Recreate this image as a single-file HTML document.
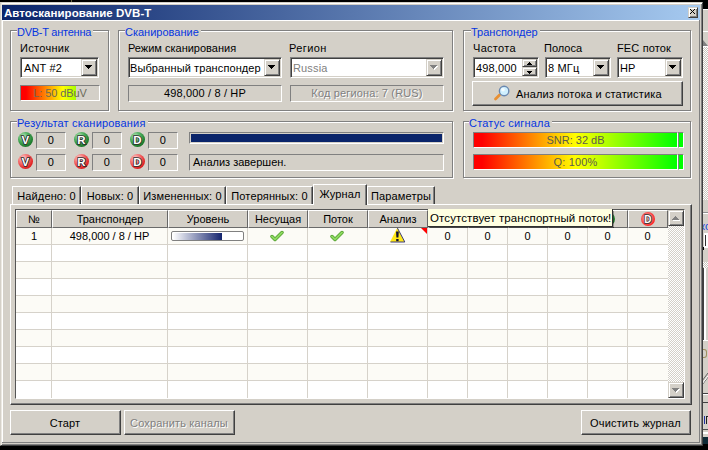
<!DOCTYPE html>
<html><head><meta charset="utf-8">
<style>
*{margin:0;padding:0;box-sizing:border-box}
html,body{width:708px;height:450px;overflow:hidden;background:#000}
body{position:relative;font-family:"Liberation Sans",sans-serif;font-size:11px;color:#000;letter-spacing:0.15px}
.a{position:absolute}
.t{position:absolute;white-space:nowrap;line-height:13px;height:13px}
.etch{position:absolute;border:1px solid #808080;box-shadow:inset 1px 1px 0 #fff,1px 1px 0 #fff}
.leg{position:absolute;background:#d4d0c8;color:#0636e0;letter-spacing:0;padding:0 2px 0 0;line-height:13px;height:13px;white-space:nowrap}
.sunk2{position:absolute;background:#fff;border:1px solid;border-color:#808080 #fff #fff #808080;box-shadow:inset 1px 1px 0 #404040,inset -1px -1px 0 #d4d0c8}
.sunk1{position:absolute;border:1px solid;border-color:#808080 #fff #fff #808080;background:#d4d0c8}
.rbtn{position:absolute;background:#d4d0c8;border:1px solid;border-color:#d4d0c8 #404040 #404040 #d4d0c8;box-shadow:inset 1px 1px 0 #fff,inset -1px -1px 0 #808080}
.pbtn{position:absolute;background:#d4d0c8;border:1px solid;border-color:#fff #404040 #404040 #fff;box-shadow:inset -1px -1px 0 #808080}
.arr{position:absolute;width:0;height:0;border-left:4px solid transparent;border-right:4px solid transparent;border-top:4px solid #000}
.dis{color:#808080;text-shadow:1px 1px 0 #fff}
.ball{position:absolute;width:15px;height:15px;border-radius:50%;color:#fff;font-weight:bold;font-size:10px;line-height:15px;text-align:center;text-shadow:0 0 1px #222,0 0 1px #222}
.g{background:radial-gradient(circle at 35% 30%,#a8dca8 0%,#45a555 35%,#1d7a2d 75%,#186a25 100%)}
.r{background:radial-gradient(circle at 35% 30%,#ffc8c8 0%,#f06060 35%,#e02020 75%,#c81818 100%)}
.tab{position:absolute;top:186px;height:18px;border-top:1px solid #fff;border-left:1px solid #fff;border-right:1px solid #404040;box-shadow:inset -1px 0 0 #808080;text-align:center;line-height:13px;padding-top:3px;white-space:nowrap}
.hd{position:absolute;top:210px;height:18px;background:#d4d0c8;border-top:1px solid #fff;border-left:1px solid #fff;border-right:1px solid #666;border-bottom:1px solid #6a6a6a;text-align:center;line-height:13px;padding-top:2px;white-space:nowrap;letter-spacing:0}
.row{position:absolute;left:16px;width:652px;height:17px;border-bottom:1px solid #d6d2ca}
.vl{position:absolute;top:228px;width:1px;height:170px;background:#d6d2ca}
.cell{position:absolute;text-align:center;line-height:13px;white-space:nowrap;letter-spacing:0}
</style></head><body>

<svg width="0" height="0" style="position:absolute"><defs>
<radialGradient id="gg" cx="35%" cy="30%" r="75%"><stop offset="0" stop-color="#c0e8c0"/><stop offset=".45" stop-color="#50b060"/><stop offset=".85" stop-color="#228030"/><stop offset="1" stop-color="#1a7028"/></radialGradient>
<radialGradient id="rg" cx="35%" cy="30%" r="75%"><stop offset="0" stop-color="#ffd8d8"/><stop offset=".45" stop-color="#f47070"/><stop offset=".85" stop-color="#e42828"/><stop offset="1" stop-color="#d02020"/></radialGradient>
<radialGradient id="rhg" cx="45%" cy="45%" r="55%"><stop offset="0" stop-color="#f0c0c0"/><stop offset=".5" stop-color="#f08080"/><stop offset="1" stop-color="#ff2020"/></radialGradient>
</defs></svg>
<!-- top black, right background app strip -->
<div class="a" style="left:702px;top:0;width:6px;height:450px;background:#d4d0c8"></div>
<div class="a" style="left:702px;top:0;width:6px;height:9px;background:#000"></div>
<div class="a" style="left:703px;top:9px;width:5px;height:1px;background:#fff"></div>
<div class="a" style="left:703px;top:31px;width:5px;height:1px;background:#fff"></div><svg class="a" style="left:702px;top:39px" width="6" height="8"><path d="M1 1 L6 7 L1 7 Z" fill="#808080"/><path d="M0 7.5 H6" stroke="#fff" stroke-width="1"/></svg>
<div class="a" style="left:703px;top:47px;width:5px;height:153px;background-color:#fff;background-image:linear-gradient(45deg,#c8c4bc 25%,transparent 25%,transparent 75%,#c8c4bc 75%),linear-gradient(45deg,#c8c4bc 25%,transparent 25%,transparent 75%,#c8c4bc 75%);background-size:2px 2px;background-position:0 0,1px 1px"></div>
<div class="a" style="left:703px;top:213px;width:5px;height:1px;background:#fff"></div><div class="a" style="left:703px;top:212px;width:5px;height:1px;background:#909090"></div>
<div class="a" style="left:703px;top:221px;width:5px;height:10px;color:#1a46d8;font-size:11px;line-height:10px;overflow:hidden;white-space:nowrap"><span style="margin-left:-3px">ко</span></div>
<div class="a" style="left:704px;top:233px;width:4px;height:15px;background:#fff"></div><div class="a" style="left:705px;top:235px;width:1px;height:11px;background:#303030"></div><div class="a" style="left:702px;top:247px;width:2px;height:3px;background:#000"></div>
<div class="a" style="left:703px;top:262px;width:5px;height:6px;background-color:#fff;background-image:linear-gradient(45deg,#c8c4bc 25%,transparent 25%,transparent 75%,#c8c4bc 75%),linear-gradient(45deg,#c8c4bc 25%,transparent 25%,transparent 75%,#c8c4bc 75%);background-size:2px 2px;background-position:0 0,1px 1px"></div>
<div class="a" style="left:702px;top:268px;width:2px;height:72px;background:#404040"></div>
<div class="a" style="left:704px;top:268px;width:2px;height:72px;background:#fff"></div>
<div class="a" style="left:703px;top:340px;width:5px;height:1px;background:#fff"></div>
<div class="a" style="left:702px;top:393px;width:6px;height:1px;background:#404040"></div><div class="a" style="left:702px;top:394px;width:6px;height:1px;background:#fff"></div><svg class="a" style="left:702px;top:368px" width="6" height="18"><path d="M0 17 L6 9 M0 13 L6 5" stroke="#606060" stroke-width="1"/><path d="M0 16 L6 8" stroke="#fff" stroke-width="1"/></svg><div class="a" style="left:703px;top:349px;width:4px;height:9px;border:1px solid #a09060;border-left:0;border-radius:0 3px 3px 0"></div>
<div class="a" style="left:702px;top:402px;width:6px;height:1px;background:#404040"></div>
<div class="a" style="left:702px;top:429px;width:6px;height:1px;background:#505050"></div><div class="a" style="left:702px;top:432px;width:6px;height:2px;background:#fff"></div><div class="a" style="left:704px;top:416px;width:1px;height:8px;background:#2030a0"></div><div class="a" style="left:706px;top:416px;width:2px;height:1px;background:#202020"></div><div class="a" style="left:706px;top:416px;width:1px;height:8px;background:#202020"></div>
<div class="a" style="left:702px;top:437px;width:6px;height:7px;background:#0e2a36"></div><div class="a" style="left:702px;top:444px;width:6px;height:6px;background:#000"></div>

<div class="a" style="left:71px;top:0;width:1px;height:2px;background:#6a6440"></div>
<!-- window -->
<div class="a" style="left:0;top:2px;width:703px;height:444px;background:#d4d0c8;border-top:1px solid #d4d0c8;border-left:1px solid #d4d0c8;border-right:1px solid #404040;border-bottom:1px solid #404040;box-shadow:inset 1px 1px 0 #fff,inset -1px -1px 0 #808080"></div>

<div class="a" style="left:2px;top:20px;width:698px;height:1px;background:#fff"></div>
<div class="a" style="left:2px;top:20px;width:1px;height:423px;background:#fff"></div>
<div class="a" style="left:1px;top:3px;width:1px;height:442px;background:#ece9e2"></div>
<div class="a" style="left:699px;top:20px;width:1px;height:423px;background:#808080"></div>
<div class="a" style="left:2px;top:442px;width:698px;height:1px;background:#808080"></div>
<!-- title bar -->
<div class="a" style="left:2px;top:5px;width:698px;height:15px;background:linear-gradient(to right,#0a246a,#a6caf0)"></div>
<div class="t" style="left:4px;top:7px;color:#fff;font-weight:bold;font-size:11.5px;letter-spacing:0.05px">Автосканирование DVB-T</div>
<div class="rbtn" style="left:688px;top:7px;width:10px;height:11px"></div>
<svg class="a" style="left:688px;top:7px" width="10" height="11" fill="#000" shape-rendering="crispEdges"><rect x="2" y="2" width="1" height="1"/><rect x="6" y="2" width="1" height="1"/><rect x="3" y="3" width="1" height="1"/><rect x="5" y="3" width="1" height="1"/><rect x="4" y="4" width="1" height="1"/><rect x="4" y="4" width="1" height="1"/><rect x="5" y="5" width="1" height="1"/><rect x="3" y="5" width="1" height="1"/><rect x="6" y="6" width="1" height="1"/><rect x="2" y="6" width="1" height="1"/></svg>

<!-- Group 1: DVB-T антенна -->
<div class="etch" style="left:10px;top:30px;width:99px;height:81px"></div>
<div class="leg" style="left:17px;top:26px;letter-spacing:-0.25px">DVB-T антенна</div>
<div class="t" style="left:20px;top:42px;letter-spacing:0.3px">Источник</div>
<div class="sunk2" style="left:20px;top:57px;width:79px;height:21px"></div>
<div class="t" style="left:24px;top:62px">ANT #2</div>
<div class="rbtn" style="left:81px;top:59px;width:16px;height:17px"></div>
<svg class="a" style="left:85px;top:65px" width="7" height="4" fill="#000" shape-rendering="crispEdges"><rect x="0" y="0" width="7" height="1"/><rect x="1" y="1" width="5" height="1"/><rect x="2" y="2" width="3" height="1"/><rect x="3" y="3" width="1" height="1"/></svg>
<div class="sunk1" style="left:20px;top:85px;width:80px;height:16px"></div>
<div class="a" style="left:21px;top:86px;width:55px;height:14px;background:linear-gradient(to right,#ff0000 0,#ff0000 5px,#ffff00 42px,#00ff00 80px);background-size:78px 14px"></div>
<div class="t" style="left:21px;top:87px;width:78px;text-align:center;color:#6a6a58;letter-spacing:-0.1px">L: 50 dBuV</div>

<!-- Group 2: Сканирование -->
<div class="etch" style="left:118px;top:30px;width:335px;height:81px"></div>
<div class="leg" style="left:125px;top:26px">Сканирование</div>
<div class="t" style="left:128px;top:42px;letter-spacing:0">Режим сканирования</div>
<div class="sunk2" style="left:128px;top:57px;width:154px;height:21px"></div>
<div class="t" style="left:130px;top:62px;letter-spacing:0.1px">Выбранный транспондер</div>
<div class="rbtn" style="left:264px;top:59px;width:16px;height:17px"></div>
<svg class="a" style="left:268px;top:65px" width="7" height="4" fill="#000" shape-rendering="crispEdges"><rect x="0" y="0" width="7" height="1"/><rect x="1" y="1" width="5" height="1"/><rect x="2" y="2" width="3" height="1"/><rect x="3" y="3" width="1" height="1"/></svg>
<div class="sunk1" style="left:128px;top:85px;width:154px;height:17px"></div>
<div class="t" style="left:129px;top:87px;width:152px;text-align:center">498,000 / 8 / HP</div>
<div class="t" style="left:289px;top:42px;letter-spacing:0.4px">Регион</div>
<div class="sunk2" style="left:290px;top:57px;width:154px;height:21px"></div>
<div class="t" style="left:293px;top:62px;color:#808080">Russia</div>
<div class="rbtn" style="left:426px;top:59px;width:16px;height:17px"></div>
<svg class="a" style="left:431px;top:66px" width="7" height="4" fill="#fff" shape-rendering="crispEdges"><rect x="0" y="0" width="7" height="1"/><rect x="1" y="1" width="5" height="1"/><rect x="2" y="2" width="3" height="1"/><rect x="3" y="3" width="1" height="1"/></svg><svg class="a" style="left:430px;top:65px" width="7" height="4" fill="#808080" shape-rendering="crispEdges"><rect x="0" y="0" width="7" height="1"/><rect x="1" y="1" width="5" height="1"/><rect x="2" y="2" width="3" height="1"/><rect x="3" y="3" width="1" height="1"/></svg>
<div class="sunk1" style="left:290px;top:85px;width:154px;height:17px"></div>
<div class="t dis" style="left:291px;top:87px;width:152px;text-align:center">Код региона: 7 (RUS)</div>

<!-- Group 3: Транспондер -->
<div class="etch" style="left:463px;top:30px;width:228px;height:81px"></div>
<div class="leg" style="left:471px;top:26px">Транспондер</div>
<div class="t" style="left:473px;top:42px;letter-spacing:0.3px">Частота</div>
<div class="sunk2" style="left:473px;top:57px;width:66px;height:21px"></div>
<div class="t" style="left:476px;top:62px">498,000</div>
<div class="rbtn" style="left:522px;top:59px;width:15px;height:8px"></div>
<div class="rbtn" style="left:522px;top:67px;width:15px;height:9px"></div>
<svg class="a" style="left:527px;top:62px" width="5" height="3" fill="#000" shape-rendering="crispEdges"><rect x="2" y="0" width="1" height="1"/><rect x="1" y="1" width="3" height="1"/><rect x="0" y="2" width="5" height="1"/></svg>
<svg class="a" style="left:527px;top:71px" width="5" height="3" fill="#000" shape-rendering="crispEdges"><rect x="0" y="0" width="5" height="1"/><rect x="1" y="1" width="3" height="1"/><rect x="2" y="2" width="1" height="1"/></svg>
<div class="t" style="left:544px;top:42px;letter-spacing:0">Полоса</div>
<div class="sunk2" style="left:545px;top:57px;width:66px;height:21px"></div>
<div class="t" style="left:548px;top:62px">8 МГц</div>
<div class="rbtn" style="left:593px;top:59px;width:16px;height:17px"></div>
<svg class="a" style="left:597px;top:65px" width="7" height="4" fill="#000" shape-rendering="crispEdges"><rect x="0" y="0" width="7" height="1"/><rect x="1" y="1" width="5" height="1"/><rect x="2" y="2" width="3" height="1"/><rect x="3" y="3" width="1" height="1"/></svg>
<div class="t" style="left:617px;top:42px">FEC поток</div>
<div class="sunk2" style="left:617px;top:57px;width:66px;height:21px"></div>
<div class="t" style="left:620px;top:62px">HP</div>
<div class="rbtn" style="left:665px;top:59px;width:16px;height:17px"></div>
<svg class="a" style="left:669px;top:65px" width="7" height="4" fill="#000" shape-rendering="crispEdges"><rect x="0" y="0" width="7" height="1"/><rect x="1" y="1" width="5" height="1"/><rect x="2" y="2" width="3" height="1"/><rect x="3" y="3" width="1" height="1"/></svg>
<div class="pbtn" style="left:472px;top:81px;width:211px;height:25px"></div>
<svg class="a" style="left:490px;top:82px" width="24" height="22">
 <line x1="5.5" y1="17" x2="9.5" y2="13" stroke="#e89034" stroke-width="2.8" stroke-linecap="round"/>
 <circle cx="14.1" cy="9" r="4.7" fill="#d0f0ff" stroke="#6a88b0" stroke-width="1.4"/>
 <circle cx="13" cy="7.8" r="1.8" fill="#fff" opacity=".8"/>
</svg>
<div class="t" style="left:516px;top:88px">Анализ потока и статистика</div>

<!-- Group 4: Результат сканирования -->
<div class="etch" style="left:10px;top:121px;width:443px;height:57px"></div>
<div class="leg" style="left:17px;top:117px;letter-spacing:0.2px">Результат сканирования</div>
<svg class="a" style="left:18px;top:132px" width="15" height="15"><circle cx="7.5" cy="7.5" r="7.5" fill="url(#gg)"/><text x="7.5" y="11.5" text-anchor="middle" font-family="Liberation Sans" font-weight="bold" font-size="11.5" fill="#fff" stroke="#2a2a2a" stroke-width="1.7" paint-order="stroke">V</text></svg>
<svg class="a" style="left:74px;top:132px" width="15" height="15"><circle cx="7.5" cy="7.5" r="7.5" fill="url(#gg)"/><text x="7.5" y="11.5" text-anchor="middle" font-family="Liberation Sans" font-weight="bold" font-size="11.5" fill="#fff" stroke="#2a2a2a" stroke-width="1.7" paint-order="stroke">R</text></svg>
<svg class="a" style="left:130px;top:132px" width="15" height="15"><circle cx="7.5" cy="7.5" r="7.5" fill="url(#gg)"/><text x="7.5" y="11.5" text-anchor="middle" font-family="Liberation Sans" font-weight="bold" font-size="11.5" fill="#fff" stroke="#2a2a2a" stroke-width="1.7" paint-order="stroke">D</text></svg>
<svg class="a" style="left:18px;top:154px" width="15" height="15"><circle cx="7.5" cy="7.5" r="7.5" fill="url(#rg)"/><text x="7.5" y="11.5" text-anchor="middle" font-family="Liberation Sans" font-weight="bold" font-size="11.5" fill="#fff" stroke="#2a2a2a" stroke-width="1.7" paint-order="stroke">V</text></svg>
<svg class="a" style="left:74px;top:154px" width="15" height="15"><circle cx="7.5" cy="7.5" r="7.5" fill="url(#rg)"/><text x="7.5" y="11.5" text-anchor="middle" font-family="Liberation Sans" font-weight="bold" font-size="11.5" fill="#fff" stroke="#2a2a2a" stroke-width="1.7" paint-order="stroke">R</text></svg>
<svg class="a" style="left:130px;top:154px" width="15" height="15"><circle cx="7.5" cy="7.5" r="7.5" fill="url(#rg)"/><text x="7.5" y="11.5" text-anchor="middle" font-family="Liberation Sans" font-weight="bold" font-size="11.5" fill="#fff" stroke="#2a2a2a" stroke-width="1.7" paint-order="stroke">D</text></svg>
<div class="sunk1" style="left:36px;top:132px;width:30px;height:17px"></div>
<div class="sunk1" style="left:92px;top:132px;width:30px;height:17px"></div>
<div class="sunk1" style="left:148px;top:132px;width:30px;height:17px"></div>
<div class="sunk1" style="left:36px;top:154px;width:30px;height:17px"></div>
<div class="sunk1" style="left:92px;top:154px;width:30px;height:17px"></div>
<div class="sunk1" style="left:148px;top:154px;width:30px;height:17px"></div>
<div class="t" style="left:37px;top:134px;width:28px;text-align:center">0</div>
<div class="t" style="left:93px;top:134px;width:28px;text-align:center">0</div>
<div class="t" style="left:149px;top:134px;width:28px;text-align:center">0</div>
<div class="t" style="left:37px;top:156px;width:28px;text-align:center">0</div>
<div class="t" style="left:93px;top:156px;width:28px;text-align:center">0</div>
<div class="t" style="left:149px;top:156px;width:28px;text-align:center">0</div>
<div class="sunk1" style="left:189px;top:132px;width:255px;height:12px;padding:1px"><div style="width:100%;height:100%;background:#0a246a"></div></div>
<div class="sunk1" style="left:189px;top:154px;width:255px;height:17px"></div>
<div class="t" style="left:193px;top:156px;letter-spacing:0">Анализ завершен.</div>

<!-- Group 5: Статус сигнала -->
<div class="etch" style="left:463px;top:121px;width:228px;height:57px"></div>
<div class="leg" style="left:469px;top:117px;letter-spacing:0.2px">Статус сигнала</div>
<div class="sunk1" style="left:473px;top:132px;width:205px;height:16px"></div><div class="sunk1" style="left:678px;top:132px;width:6px;height:16px"></div>
<div class="a" style="left:474px;top:133px;width:203px;height:14px;background:linear-gradient(to right,#ff0000 0%,#ff0000 4%,#ffff00 50%,#00ff00 100%)"></div>
<div class="a" style="left:679px;top:133px;width:4px;height:14px;background:#00ff00"></div>
<div class="t" style="left:474px;top:134px;width:203px;text-align:center;color:#5c5c4c;letter-spacing:0">SNR: 32 dB</div>
<div class="sunk1" style="left:473px;top:154px;width:205px;height:16px"></div><div class="sunk1" style="left:678px;top:154px;width:6px;height:16px"></div>
<div class="a" style="left:474px;top:155px;width:203px;height:14px;background:linear-gradient(to right,#ff0000 0%,#ff0000 4%,#ffff00 50%,#00ff00 100%)"></div>
<div class="a" style="left:679px;top:155px;width:4px;height:14px;background:#00ff00"></div>
<div class="t" style="left:474px;top:156px;width:203px;text-align:center;color:#5c5c4c">Q: 100%</div>

<!-- Tab panel -->
<div class="a" style="left:10px;top:204px;width:682px;height:201px;background:#d4d0c8;border-top:1px solid #fff;border-left:1px solid #fff;border-right:1px solid #404040;border-bottom:1px solid #404040;box-shadow:inset -1px -1px 0 #808080"></div>
<div class="tab" style="left:12px;width:69px">Найдено: 0</div>
<div class="tab" style="left:81px;width:58px">Новых: 0</div>
<div class="tab" style="left:139px;width:87px">Измененных: 0</div>
<div class="tab" style="left:226px;width:87px">Потерянных: 0</div>
<div class="tab" style="left:367px;width:68px">Параметры</div>
<div class="tab" style="left:313px;top:184px;width:54px;height:21px;background:#d4d0c8;padding-top:3px">Журнал</div>

<!-- ListView -->
<div class="a" style="left:15px;top:209px;width:670px;height:190px;background:#fff;border:1px solid;border-color:#555 #fff #fff #555"></div>
<div class="hd" style="left:16px;width:36px">№</div>
<div class="hd" style="left:52px;width:116px">Транспондер</div>
<div class="hd" style="left:168px;width:80px">Уровень</div>
<div class="hd" style="left:248px;width:60px">Несущая</div>
<div class="hd" style="left:308px;width:60px">Поток</div>
<div class="hd" style="left:368px;width:60px">Анализ</div>
<div class="hd" style="left:428px;width:40px"></div>
<div class="hd" style="left:468px;width:40px"></div>
<div class="hd" style="left:508px;width:40px"></div>
<div class="hd" style="left:548px;width:40px"></div>
<div class="hd" style="left:588px;width:40px"></div>
<div class="hd" style="left:628px;width:40px"></div>
<svg class="a" style="left:440px;top:212px" width="14" height="14"><circle cx="7.0" cy="7.0" r="7.0" fill="url(#gg)"/><text x="7.0" y="11.0" text-anchor="middle" font-family="Liberation Sans" font-weight="bold" font-size="10" fill="#fff" stroke="#2a2a2a" stroke-width="1.6" paint-order="stroke">V</text></svg>
<svg class="a" style="left:480px;top:212px" width="14" height="14"><circle cx="7.0" cy="7.0" r="7.0" fill="url(#gg)"/><text x="7.0" y="11.0" text-anchor="middle" font-family="Liberation Sans" font-weight="bold" font-size="10" fill="#fff" stroke="#2a2a2a" stroke-width="1.6" paint-order="stroke">R</text></svg>
<svg class="a" style="left:520px;top:212px" width="14" height="14"><circle cx="7.0" cy="7.0" r="7.0" fill="url(#gg)"/><text x="7.0" y="11.0" text-anchor="middle" font-family="Liberation Sans" font-weight="bold" font-size="10" fill="#fff" stroke="#2a2a2a" stroke-width="1.6" paint-order="stroke">D</text></svg>
<svg class="a" style="left:560px;top:212px" width="14" height="14"><circle cx="7.0" cy="7.0" r="7.0" fill="url(#rg)"/><text x="7.0" y="11.0" text-anchor="middle" font-family="Liberation Sans" font-weight="bold" font-size="10" fill="#fff" stroke="#2a2a2a" stroke-width="1.6" paint-order="stroke">V</text></svg>
<svg class="a" style="left:601px;top:212px" width="14" height="14"><circle cx="7.0" cy="7.0" r="7.0" fill="url(#gg)"/><text x="7.0" y="11.0" text-anchor="middle" font-family="Liberation Sans" font-weight="bold" font-size="10" fill="#fff" stroke="#2a2a2a" stroke-width="1.6" paint-order="stroke">D</text></svg>
<svg class="a" style="left:641px;top:212px" width="14" height="14"><circle cx="7.0" cy="7.0" r="7.0" fill="url(#rhg)"/><text x="7.0" y="11.0" text-anchor="middle" font-family="Liberation Sans" font-weight="bold" font-size="10" fill="#fff" stroke="#303030" stroke-width="1.6" paint-order="stroke">D</text></svg>

<div class="row" style="top:228px;background:#fcfbf6"></div>
<div class="row" style="top:245px;background:#fff"></div>
<div class="row" style="top:262px;background:#fcfbf6"></div>
<div class="row" style="top:279px;background:#fff"></div>
<div class="row" style="top:296px;background:#fcfbf6"></div>
<div class="row" style="top:313px;background:#fff"></div>
<div class="row" style="top:330px;background:#fcfbf6"></div>
<div class="row" style="top:347px;background:#fff"></div>
<div class="row" style="top:364px;background:#fcfbf6"></div>
<div class="row" style="top:381px;background:#fff;height:17px;border-bottom:0"></div>
<div class="vl" style="left:51px"></div>
<div class="vl" style="left:167px"></div>
<div class="vl" style="left:247px"></div>
<div class="vl" style="left:307px"></div>
<div class="vl" style="left:367px"></div>
<div class="vl" style="left:427px"></div>
<div class="vl" style="left:467px"></div>
<div class="vl" style="left:507px"></div>
<div class="vl" style="left:547px"></div>
<div class="vl" style="left:587px"></div>
<div class="vl" style="left:627px"></div>

<div class="cell" style="left:17px;top:230px;width:34px">1</div>
<div class="cell" style="left:52px;top:230px;width:115px">498,000 / 8 / HP</div>
<div class="a" style="left:171px;top:231px;width:73px;height:10px;border:1px solid #808080;border-radius:2px;background:#fff"></div>
<div class="a" style="left:173px;top:233px;width:49px;height:7px;background:linear-gradient(to right,#ffffff,#14246e)"></div>
<svg class="a" style="left:270px;top:230px" width="14" height="12"><path d="M2 6.5 L5 9.5 L12 2.5" fill="none" stroke="#4e9a2a" stroke-width="3.4" stroke-linecap="round" stroke-linejoin="round"/><path d="M2 6.5 L5 9.5 L12 2.5" fill="none" stroke="#8cd860" stroke-width="2" stroke-linecap="round" stroke-linejoin="round"/></svg>
<svg class="a" style="left:330px;top:230px" width="14" height="12"><path d="M2 6.5 L5 9.5 L12 2.5" fill="none" stroke="#4e9a2a" stroke-width="3.4" stroke-linecap="round" stroke-linejoin="round"/><path d="M2 6.5 L5 9.5 L12 2.5" fill="none" stroke="#8cd860" stroke-width="2" stroke-linecap="round" stroke-linejoin="round"/></svg>
<svg class="a" style="left:389px;top:227px" width="17" height="16"><path d="M8.3 0.8 L15.8 15 L1 15 Z" fill="#ffe818"/><path d="M8.3 0.8 L15.8 15 L1.5 15" fill="none" stroke="#3a3a7a" stroke-width="1"/><path d="M7 4.5 h2.8 l-0.4 6 h-2 z" fill="#101030"/><rect x="7.2" y="12" width="2.4" height="2.2" fill="#101030"/></svg>
<svg class="a" style="left:421px;top:228px" width="6" height="6"><path d="M0 0 L6 0 L6 6 Z" fill="#ff0000"/></svg>
<div class="cell" style="left:428px;top:230px;width:39px">0</div>
<div class="cell" style="left:468px;top:230px;width:39px">0</div>
<div class="cell" style="left:508px;top:230px;width:39px">0</div>
<div class="cell" style="left:548px;top:230px;width:39px">0</div>
<div class="cell" style="left:588px;top:230px;width:39px">0</div>
<div class="cell" style="left:628px;top:230px;width:39px">0</div>

<!-- scrollbar -->
<div class="a" style="left:668px;top:210px;width:16px;height:188px;background-color:#fff;background-image:linear-gradient(45deg,#d4d0c8 25%,transparent 25%,transparent 75%,#d4d0c8 75%),linear-gradient(45deg,#d4d0c8 25%,transparent 25%,transparent 75%,#d4d0c8 75%);background-size:2px 2px;background-position:0 0,1px 1px"></div>
<div class="rbtn" style="left:668px;top:210px;width:16px;height:16px"></div>
<svg class="a" style="left:673px;top:217px" width="7" height="4" fill="#fff" shape-rendering="crispEdges"><rect x="3" y="0" width="1" height="1"/><rect x="2" y="1" width="3" height="1"/><rect x="1" y="2" width="5" height="1"/><rect x="0" y="3" width="7" height="1"/></svg><svg class="a" style="left:672px;top:216px" width="7" height="4" fill="#808080" shape-rendering="crispEdges"><rect x="3" y="0" width="1" height="1"/><rect x="2" y="1" width="3" height="1"/><rect x="1" y="2" width="5" height="1"/><rect x="0" y="3" width="7" height="1"/></svg>
<div class="rbtn" style="left:668px;top:382px;width:16px;height:16px"></div>
<svg class="a" style="left:673px;top:389px" width="7" height="4" fill="#fff" shape-rendering="crispEdges"><rect x="0" y="0" width="7" height="1"/><rect x="1" y="1" width="5" height="1"/><rect x="2" y="2" width="3" height="1"/><rect x="3" y="3" width="1" height="1"/></svg><svg class="a" style="left:672px;top:388px" width="7" height="4" fill="#808080" shape-rendering="crispEdges"><rect x="0" y="0" width="7" height="1"/><rect x="1" y="1" width="5" height="1"/><rect x="2" y="2" width="3" height="1"/><rect x="3" y="3" width="1" height="1"/></svg>

<!-- tooltip -->
<div class="a" style="left:430px;top:227px;width:184px;height:1px;background:rgba(0,0,0,.35)"></div>
<div class="a" style="left:613px;top:211px;width:1px;height:17px;background:rgba(0,0,0,.3)"></div>
<div class="a" style="left:428px;top:209px;width:185px;height:18px;background:#ffffe1;border-right:1px solid #303030;border-bottom:1px solid #303030"></div>
<div class="t" style="left:430px;top:212px;font-size:11.5px;letter-spacing:0.1px">Отсутствует транспортный поток!</div>

<!-- bottom buttons -->
<div class="pbtn" style="left:10px;top:410px;width:111px;height:25px"></div>
<div class="t" style="left:10px;top:417px;width:110px;text-align:center">Старт</div>
<div class="pbtn" style="left:124px;top:410px;width:111px;height:25px"></div>
<div class="t dis" style="left:124px;top:417px;width:110px;text-align:center">Сохранить каналы</div>
<div class="pbtn" style="left:581px;top:410px;width:110px;height:25px"></div>
<div class="t" style="left:581px;top:417px;width:109px;text-align:center">Очистить журнал</div>

</body></html>
